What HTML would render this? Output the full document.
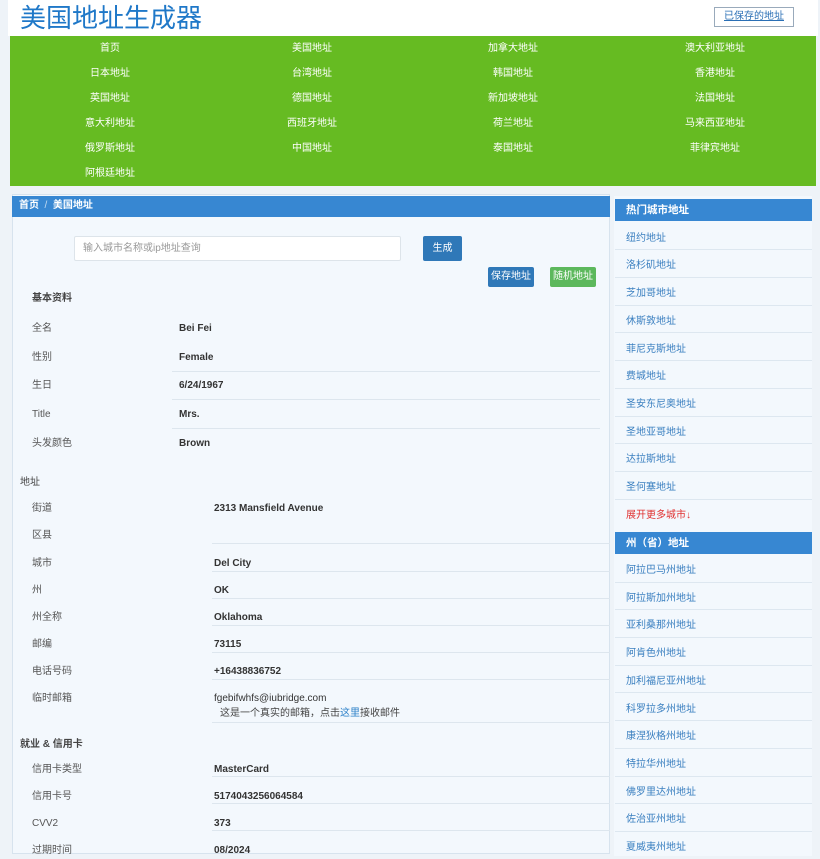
<!DOCTYPE html>
<html><head><meta charset="utf-8"><style>
*{margin:0;padding:0;box-sizing:border-box}
body{width:820px;height:846px;overflow:hidden;background:#eef3f8;font-family:"Liberation Sans","Noto Sans CJK SC",sans-serif;font-size:10px;color:#555;position:relative}
.a{position:absolute;white-space:nowrap;line-height:16px}
#hdr{left:8px;top:0;width:810px;height:36px;background:#fff}
#title{left:20px;top:3px;font-size:26px;line-height:30px;color:#1f78c8}
#saved{left:714px;top:7px;width:80px;height:20px;border:1px solid #9ab;color:#2a6fb5;text-decoration:underline;font-size:10px;text-align:center;line-height:18px;background:#fff}
#nav{left:10px;top:36px;width:806px;height:150px;background:#66bb22}
.n{color:#fff;font-size:10px;transform:translateX(-50%)}
#left{left:12px;top:194px;width:598px;height:660px;background:#f3f8fd;border:1px solid #d7e3ee}
#bc{left:12px;top:196px;width:598px;height:21px;background:#3787d2;color:#fff;font-weight:bold;font-size:10px;padding:2px 7px}
#side{left:614px;top:196px;width:198px;height:660px;background:#f3f8fd}
.sh{left:615px;width:197px;height:22px;background:#3787d2;color:#fff;font-weight:bold;font-size:10.5px;padding:3px 11px}
.si{left:626px;color:#3a7fc0;font-size:10px}
.sl{left:615px;width:197px;height:1px;background:#dde7f0}
.lb{color:#555;font-size:10px}
.v{color:#333;font-weight:bold;font-size:10px}
.ln{height:1px;background:#dde6ee}
.h{color:#444;font-weight:bold;font-size:10px}
</style></head><body>
<div class="a" id="hdr"></div>
<div class="a" id="title">美国地址生成器</div>
<div class="a" id="saved">已保存的地址</div>
<div class="a" id="nav"></div>
<div class="a n" style="left:110px;top:41px">首页</div><div class="a n" style="left:312px;top:41px">美国地址</div><div class="a n" style="left:513px;top:41px">加拿大地址</div><div class="a n" style="left:715px;top:41px">澳大利亚地址</div>
<div class="a n" style="left:110px;top:66px">日本地址</div><div class="a n" style="left:312px;top:66px">台湾地址</div><div class="a n" style="left:513px;top:66px">韩国地址</div><div class="a n" style="left:715px;top:66px">香港地址</div>
<div class="a n" style="left:110px;top:91px">英国地址</div><div class="a n" style="left:312px;top:91px">德国地址</div><div class="a n" style="left:513px;top:91px">新加坡地址</div><div class="a n" style="left:715px;top:91px">法国地址</div>
<div class="a n" style="left:110px;top:116px">意大利地址</div><div class="a n" style="left:312px;top:116px">西班牙地址</div><div class="a n" style="left:513px;top:116px">荷兰地址</div><div class="a n" style="left:715px;top:116px">马来西亚地址</div>
<div class="a n" style="left:110px;top:141px">俄罗斯地址</div><div class="a n" style="left:312px;top:141px">中国地址</div><div class="a n" style="left:513px;top:141px">泰国地址</div><div class="a n" style="left:715px;top:141px">菲律宾地址</div>
<div class="a n" style="left:110px;top:166px">阿根廷地址</div>

<div class="a" id="left"></div>
<div class="a" id="bc">首页 <span style="font-weight:normal;opacity:.7">&nbsp;/&nbsp;</span> 美国地址</div>
<div class="a" style="left:74px;top:236px;width:327px;height:25px;background:#fff;border:1px solid #dde4ea;border-radius:2px;color:#999;padding:4px 8px">输入城市名称或ip地址查询</div>
<div class="a" style="left:423px;top:236px;width:39px;height:25px;background:#2f78b8;color:#fff;border-radius:2px;text-align:center;line-height:25px">生成</div>
<div class="a" style="left:488px;top:267px;width:46px;height:20px;background:#2f78b8;color:#fff;border-radius:2px;text-align:center;line-height:20px">保存地址</div>
<div class="a" style="left:550px;top:267px;width:46px;height:20px;background:#5cb85c;color:#fff;border-radius:2px;text-align:center;line-height:20px">随机地址</div>

<div class="a h" style="left:32px;top:291px">基本资料</div>
<div class="a lb" style="left:32px;top:321px">全名</div><div class="a v" style="left:179px;top:321px">Bei Fei</div>
<div class="a lb" style="left:32px;top:350px">性别</div><div class="a v" style="left:179px;top:350px">Female</div>
<div class="a ln" style="left:172px;top:371px;width:428px"></div>
<div class="a lb" style="left:32px;top:378px">生日</div><div class="a v" style="left:179px;top:378px">6/24/1967</div>
<div class="a ln" style="left:172px;top:399px;width:428px"></div>
<div class="a lb" style="left:32px;top:407px">Title</div><div class="a v" style="left:179px;top:407px">Mrs.</div>
<div class="a ln" style="left:172px;top:428px;width:428px"></div>
<div class="a lb" style="left:32px;top:436px">头发颜色</div><div class="a v" style="left:179px;top:436px">Brown</div>

<div class="a h" style="left:20px;top:475px;font-weight:normal;color:#444">地址</div>
<div class="a lb" style="left:32px;top:501px">街道</div><div class="a v" style="left:214px;top:501px">2313 Mansfield Avenue</div>
<div class="a lb" style="left:32px;top:528px">区县</div>
<div class="a ln" style="left:212px;top:543px;width:398px"></div>
<div class="a lb" style="left:32px;top:556px">城市</div><div class="a v" style="left:214px;top:556px">Del City</div>
<div class="a ln" style="left:212px;top:571px;width:398px"></div>
<div class="a lb" style="left:32px;top:583px">州</div><div class="a v" style="left:214px;top:583px">OK</div>
<div class="a ln" style="left:212px;top:598px;width:398px"></div>
<div class="a lb" style="left:32px;top:610px">州全称</div><div class="a v" style="left:214px;top:610px">Oklahoma</div>
<div class="a ln" style="left:212px;top:625px;width:398px"></div>
<div class="a lb" style="left:32px;top:637px">邮编</div><div class="a v" style="left:214px;top:637px">73115</div>
<div class="a ln" style="left:212px;top:652px;width:398px"></div>
<div class="a lb" style="left:32px;top:664px">电话号码</div><div class="a v" style="left:214px;top:664px">+16438836752</div>
<div class="a ln" style="left:212px;top:679px;width:398px"></div>
<div class="a lb" style="left:32px;top:691px">临时邮箱</div><div class="a v" style="left:214px;top:691px;font-weight:normal;color:#333">fgebifwhfs@iubridge.com</div>
<div class="a lb" style="left:220px;top:706px;color:#444">这是一个真实的邮箱，点击<span style="color:#2a7fc8">这里</span>接收邮件</div>
<div class="a ln" style="left:212px;top:722px;width:398px"></div>
<div class="a h" style="left:20px;top:737px">就业 &amp; 信用卡</div>
<div class="a lb" style="left:32px;top:762px">信用卡类型</div><div class="a v" style="left:214px;top:762px">MasterCard</div>
<div class="a ln" style="left:212px;top:776px;width:398px"></div>
<div class="a lb" style="left:32px;top:789px">信用卡号</div><div class="a v" style="left:214px;top:789px">5174043256064584</div>
<div class="a ln" style="left:212px;top:803px;width:398px"></div>
<div class="a lb" style="left:32px;top:816px">CVV2</div><div class="a v" style="left:214px;top:816px">373</div>
<div class="a ln" style="left:212px;top:830px;width:398px"></div>
<div class="a lb" style="left:32px;top:843px">过期时间</div><div class="a v" style="left:214px;top:843px">08/2024</div>

<div class="a" id="side"></div>
<div class="a sh" style="top:199px">热门城市地址</div>
<div class="a si" style="top:231px">纽约地址</div><div class="a sl" style="top:249px"></div>
<div class="a si" style="top:258px">洛杉矶地址</div><div class="a sl" style="top:277px"></div>
<div class="a si" style="top:286px">芝加哥地址</div><div class="a sl" style="top:305px"></div>
<div class="a si" style="top:314px">休斯敦地址</div><div class="a sl" style="top:332px"></div>
<div class="a si" style="top:342px">菲尼克斯地址</div><div class="a sl" style="top:360px"></div>
<div class="a si" style="top:369px">费城地址</div><div class="a sl" style="top:388px"></div>
<div class="a si" style="top:397px">圣安东尼奥地址</div><div class="a sl" style="top:416px"></div>
<div class="a si" style="top:425px">圣地亚哥地址</div><div class="a sl" style="top:443px"></div>
<div class="a si" style="top:452px">达拉斯地址</div><div class="a sl" style="top:471px"></div>
<div class="a si" style="top:480px">圣何塞地址</div><div class="a sl" style="top:499px"></div>
<div class="a si" style="top:508px;color:#e03030">展开更多城市↓</div>
<div class="a sh" style="top:532px">州（省）地址</div>
<div class="a si" style="top:563px">阿拉巴马州地址</div><div class="a sl" style="top:582px"></div>
<div class="a si" style="top:591px">阿拉斯加州地址</div><div class="a sl" style="top:609px"></div>
<div class="a si" style="top:618px">亚利桑那州地址</div><div class="a sl" style="top:637px"></div>
<div class="a si" style="top:646px">阿肯色州地址</div><div class="a sl" style="top:665px"></div>
<div class="a si" style="top:674px">加利福尼亚州地址</div><div class="a sl" style="top:692px"></div>
<div class="a si" style="top:702px">科罗拉多州地址</div><div class="a sl" style="top:720px"></div>
<div class="a si" style="top:729px">康涅狄格州地址</div><div class="a sl" style="top:748px"></div>
<div class="a si" style="top:757px">特拉华州地址</div><div class="a sl" style="top:776px"></div>
<div class="a si" style="top:785px">佛罗里达州地址</div><div class="a sl" style="top:803px"></div>
<div class="a si" style="top:812px">佐治亚州地址</div><div class="a sl" style="top:831px"></div>
<div class="a si" style="top:840px">夏威夷州地址</div>
</body></html>
